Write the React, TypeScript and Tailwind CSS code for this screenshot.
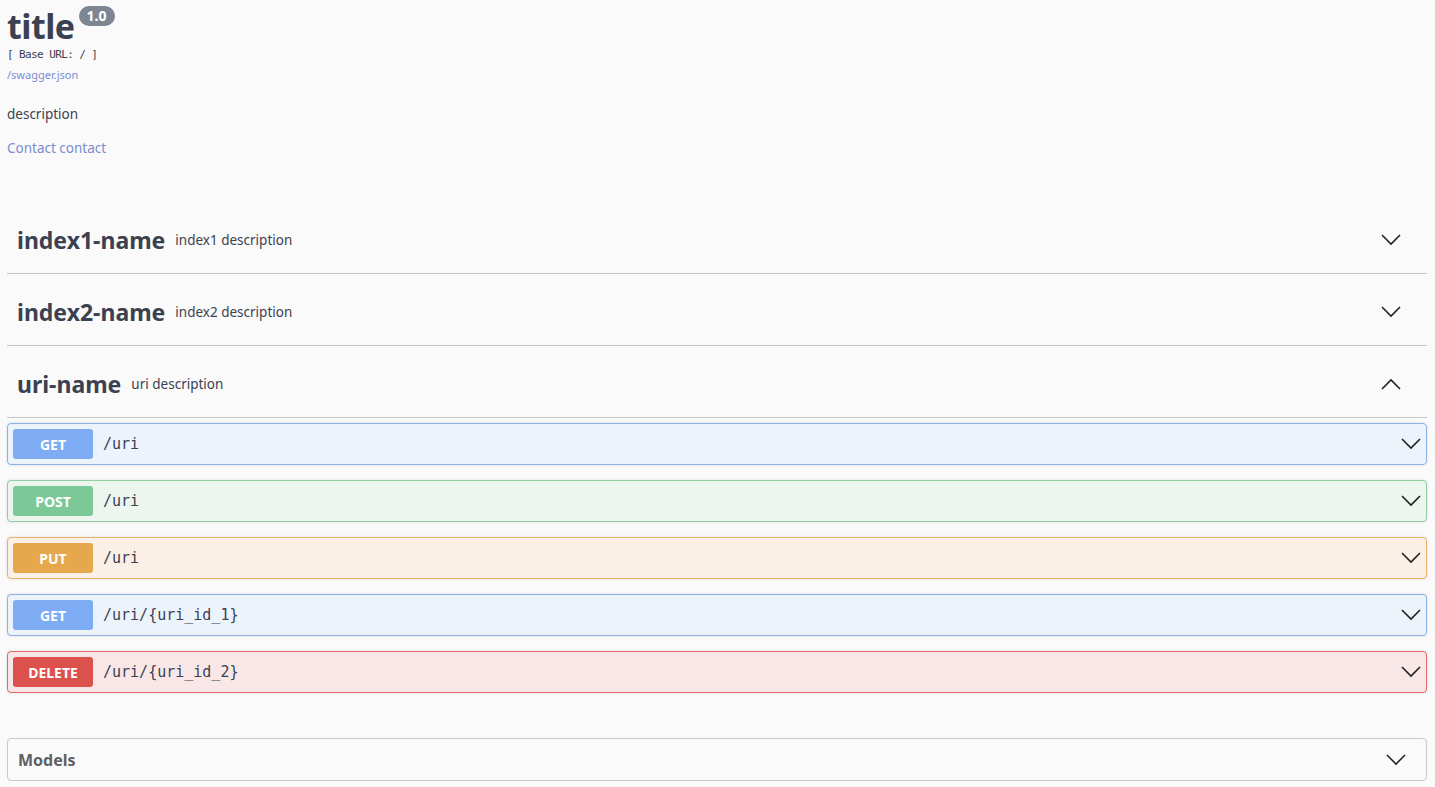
import React from "react";

type Op = {
  method: string;
  path: string;
  badge: string;
  bg: string;
  border: string;
};

const ops: Op[] = [
  { method: "GET", path: "/uri", badge: "bg-[#7eacf4]", bg: "bg-[#edf3fb]", border: "border-[#8db1e6]" },
  { method: "POST", path: "/uri", badge: "bg-[#7cc897]", bg: "bg-[#edf5ef]", border: "border-[#8dcea3]" },
  { method: "PUT", path: "/uri", badge: "bg-[#e6a84c]", bg: "bg-[#faf0e5]", border: "border-[#e9b26a]" },
  { method: "GET", path: "/uri/{uri_id_1}", badge: "bg-[#7eacf4]", bg: "bg-[#edf3fb]", border: "border-[#8db1e6]" },
  { method: "DELETE", path: "/uri/{uri_id_2}", badge: "bg-[#dc514b]", bg: "bg-[#f8e7e6]", border: "border-[#de6a63]" },
];

const Chevron = ({ up = false, className = "" }: { up?: boolean; className?: string }) => (
  <svg width="20" height="12" viewBox="0 0 20 12" className={className} fill="none">
    <polyline
      points={up ? "1,11 10,2 19,11" : "1,1 10,10 19,1"}
      stroke="#222"
      strokeWidth="1.6"
      strokeLinejoin="miter"
    />
  </svg>
);

function TagHeader({ name, desc, open = false }: { name: string; desc: string; open?: boolean }) {
  return (
    <div className="flex items-center h-[67px] mb-[5px] border-b border-[#c4c6cb] pl-[10px] pr-[26px]">
      <span className="text-[23px] font-bold text-[#3b4151] leading-none">{name}</span>
      <span className="ml-[10px] text-[13.5px] text-[#3b4151] mt-[1px]">{desc}</span>
      <Chevron up={open} className="ml-auto" />
    </div>
  );
}

export default function App() {
  return (
    <div
      className="min-h-[787px] bg-[#fafafa] pl-[7px] pr-[8px] text-[#3b4151]"
      style={{ fontFamily: '"Noto Sans", "Open Sans", sans-serif' }}
    >
      {/* Info */}
      <div className="h-[207px]">
        <div className="flex items-start h-[44px]">
          <span className="text-[34px] font-bold leading-[44px] tracking-[-0.5px] mt-[4px]">title</span>
          <span className="ml-[4px] mt-[6px] h-[20px] px-[8px] rounded-full bg-[#7d8492] text-white text-[14px] font-bold leading-[20px]">
            1.0
          </span>
        </div>
        <div
          className="text-[11px] leading-[14px] mt-[4px] tracking-[-0.6px] text-[#3b4151]"
          style={{ fontFamily: '"DejaVu Sans Mono", monospace' }}
        >
          [ Base URL: / ]
        </div>
        <div className="text-[11px] leading-[14px] mt-[6px] text-[#7b8dd2]">/swagger.json</div>
        <div className="text-[13.5px] leading-[18px] mt-[23px]">description</div>
        <div className="text-[13.5px] leading-[18px] mt-[16px] text-[#7b8dd2]">Contact contact</div>
      </div>

      {/* Tags */}
      <TagHeader name="index1-name" desc="index1 description" />
      <TagHeader name="index2-name" desc="index2 description" />
      <TagHeader name="uri-name" desc="uri description" open />

      <div className="flex flex-col gap-[15px]">
        {ops.map((op, i) => (
          <div
            key={i}
            className={`flex items-center h-[42px] border rounded-[4px] px-[5px] shadow-[0_0_3px_rgba(0,0,0,0.12)] ${op.bg} ${op.border}`}
          >
            <span
              className={`w-[80px] h-[30px] rounded-[3px] text-white text-[14px] font-bold flex items-center justify-center ${op.badge}`}
            >
              {op.method}
            </span>
            <span
              className="ml-[10px] text-[15px] text-[#3b4151]"
              style={{ fontFamily: '"DejaVu Sans Mono", monospace' }}
            >
              {op.path}
            </span>
            <Chevron className="ml-auto" />
          </div>
        ))}
      </div>

      {/* Models */}
      <div className="mt-[45px] flex items-center h-[43px] border border-[#c9c9c9] rounded-[4px] pl-[10px] pr-[20px]">
        <span className="text-[16px] font-bold text-[#606060]">Models</span>
        <Chevron className="ml-auto" />
      </div>
    </div>
  );
}
